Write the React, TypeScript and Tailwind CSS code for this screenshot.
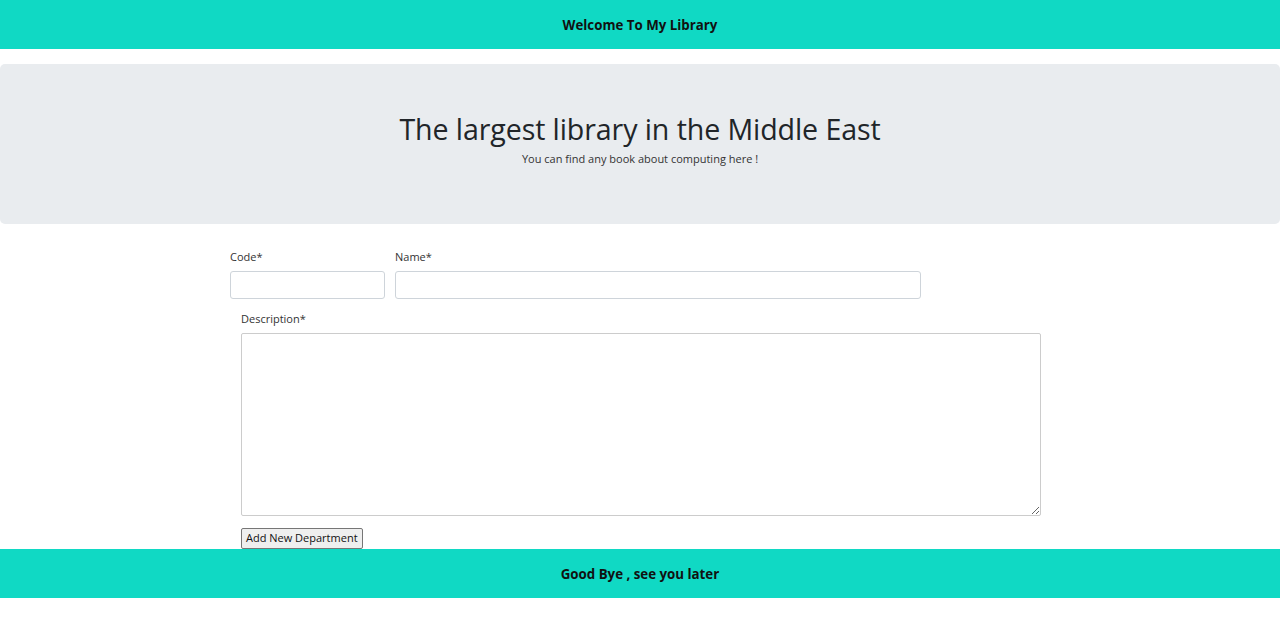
import React from 'react';

const font = { fontFamily: '"Open Sans", "Noto Sans", sans-serif' };

const App: React.FC = () => {
  return (
    <div className="bg-white text-[#212529] min-h-[633px]" style={font}>
      <header className="h-[49px] bg-[#10d9c4] flex items-center justify-center pt-[3px]">
        <span className="text-[13.3px] font-bold text-[#111]">Welcome To My Library</span>
      </header>

      <section className="mt-[15px] h-[160px] bg-[#e9ecef] rounded-[5px] flex flex-col items-center pt-[47px]">
        <h1 className="text-[28.6px] leading-[36px] font-medium tracking-[-0.1px]">The largest library in the Middle East</h1>
        <p className="text-[11px] leading-[14px] mt-[5px] text-[#333]">You can find any book about computing here !</p>
      </section>

      <form className="pl-[230px] pt-[25px]">
        <div className="flex gap-[10px]">
          <div className="flex flex-col">
            <label className="text-[11px] leading-[16px] text-[#333]">Code*</label>
            <input className="mt-[6px] w-[155px] h-[28px] border border-[#ced4da] rounded-[3px]" />
          </div>
          <div className="flex flex-col">
            <label className="text-[11px] leading-[16px] text-[#333]">Name*</label>
            <input className="mt-[6px] w-[526px] h-[28px] border border-[#ced4da] rounded-[3px]" />
          </div>
        </div>
        <div className="pl-[11px] mt-[12px] flex flex-col items-start">
          <label className="text-[11px] leading-[16px] text-[#333]">Description*</label>
          <textarea className="mt-[6px] w-[800px] h-[183px] border border-[#ccc] rounded-[2px] resize" />
          <button
            type="button"
            className="mt-[12px] h-[21px] px-[4px] text-[11px] text-[#111] bg-[#efefef] border border-[#767676] rounded-[2px]"
          >
            Add New Department
          </button>
        </div>
      </form>

      <footer className="h-[49px] bg-[#10d9c4] flex items-center justify-center pt-[3px]">
        <span className="text-[13.3px] font-bold text-[#111]">Good Bye , see you later</span>
      </footer>
    </div>
  );
};

export default App;
